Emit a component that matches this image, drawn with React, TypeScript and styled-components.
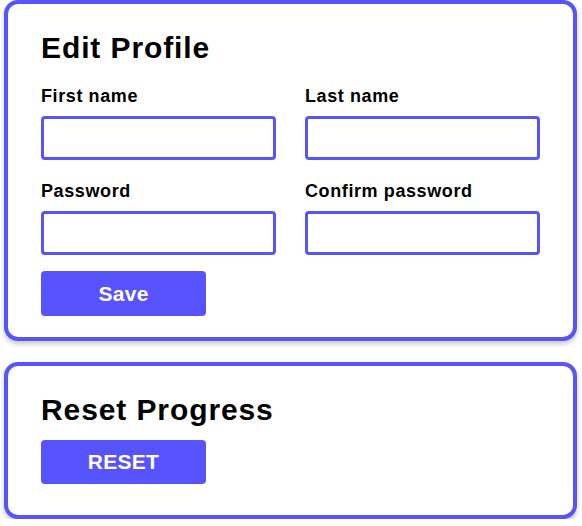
import React from "react";
import styled, { createGlobalStyle } from "styled-components";

const accent = "#5753ff";

const GlobalStyle = createGlobalStyle`
  body {
    margin: 0;
    background: #ffffff;
    font-family: "Liberation Sans", Arial, Helvetica, sans-serif;
    color: #000000;
  }
`;

const Page = styled.div`
  width: 573px;
  margin-left: 4px;
  display: flex;
  flex-direction: column;
  gap: 21px;
`;

const Card = styled.section<{ $bottom: number }>`
  box-sizing: border-box;
  border: 4px solid ${accent};
  border-radius: 14px;
  background: #ffffff;
  box-shadow: 0 3px 5px rgba(0, 0, 0, 0.22);
  padding: 26px 33px ${(p) => p.$bottom}px;
`;

const Title = styled.h2`
  margin: 0;
  font-size: 30px;
  line-height: 36px;
  font-weight: 700;
  letter-spacing: 0.9px;
`;

const Form = styled.form`
  margin-top: 19px;
  display: flex;
  flex-direction: column;
  align-items: flex-start;
`;

const Grid = styled.div`
  display: grid;
  grid-template-columns: 235px 235px;
  column-gap: 29px;
  row-gap: 20px;
`;

const Field = styled.label`
  display: flex;
  flex-direction: column;
  gap: 9px;
`;

const LabelText = styled.span`
  font-size: 18px;
  line-height: 22px;
  font-weight: 700;
  letter-spacing: 0.6px;
`;

const Input = styled.input`
  box-sizing: border-box;
  width: 235px;
  height: 44px;
  border: 3px solid ${accent};
  border-radius: 4px;
  background: #ffffff;
  padding: 0 10px;
  font-size: 16px;
  font-family: inherit;
  outline: none;
`;

const Button = styled.button<{ $top: number; $height: number }>`
  box-sizing: border-box;
  margin-top: ${(p) => p.$top}px;
  width: 165px;
  height: ${(p) => p.$height}px;
  border: none;
  border-radius: 4px;
  background: ${accent};
  color: #ffffff;
  font-family: inherit;
  font-size: 21px;
  font-weight: 700;
  letter-spacing: 0.3px;
  cursor: pointer;
`;

export default function App() {
  return (
    <>
      <GlobalStyle />
      <Page>
        <Card $bottom={21}>
          <Title>Edit Profile</Title>
          <Form onSubmit={(e) => e.preventDefault()}>
            <Grid>
              <Field>
                <LabelText>First name</LabelText>
                <Input type="text" />
              </Field>
              <Field>
                <LabelText>Last name</LabelText>
                <Input type="text" />
              </Field>
              <Field>
                <LabelText>Password</LabelText>
                <Input type="password" />
              </Field>
              <Field>
                <LabelText>Confirm password</LabelText>
                <Input type="password" />
              </Field>
            </Grid>
            <Button type="submit" $top={16} $height={45}>
              Save
            </Button>
          </Form>
        </Card>
        <Card $bottom={31}>
          <Title>Reset Progress</Title>
          <Button type="button" $top={12} $height={44}>
            RESET
          </Button>
        </Card>
      </Page>
    </>
  );
}
